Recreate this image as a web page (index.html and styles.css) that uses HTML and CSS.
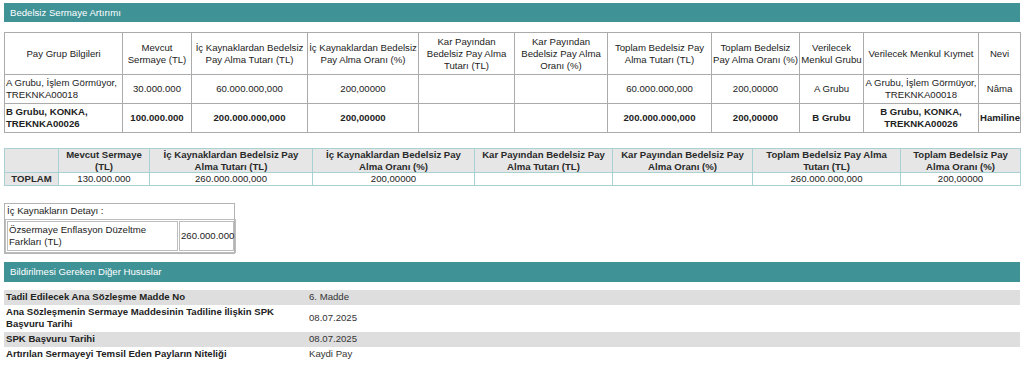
FILE: index.html
```html
<!DOCTYPE html>
<html lang="tr">
<head>
<meta charset="utf-8">
<title>Bedelsiz Sermaye Artırımı</title>
<link rel="stylesheet" href="styles.css">
</head>
<body>
<div class="page">
  <div class="bar">Bedelsiz Sermaye Artırımı</div>

  <table class="main">
    <colgroup>
      <col class="m1"><col class="m2"><col class="m3"><col class="m4"><col class="m5"><col class="m6">
      <col class="m7"><col class="m8"><col class="m9"><col class="m10"><col class="m11">
    </colgroup>
    <tr class="head">
      <td>Pay Grup Bilgileri</td>
      <td>Mevcut Sermaye (TL)</td>
      <td>İç Kaynaklardan Bedelsiz Pay Alma Tutarı (TL)</td>
      <td>İç Kaynaklardan Bedelsiz Pay Alma Oranı (%)</td>
      <td>Kar Payından Bedelsiz Pay Alma Tutarı (TL)</td>
      <td>Kar Payından Bedelsiz Pay Alma Oranı (%)</td>
      <td>Toplam Bedelsiz Pay Alma Tutarı (TL)</td>
      <td>Toplam Bedelsiz Pay Alma Oranı (%)</td>
      <td>Verilecek Menkul Grubu</td>
      <td>Verilecek Menkul Kıymet</td>
      <td>Nevi</td>
    </tr>
    <tr>
      <td class="left">A Grubu, İşlem Görmüyor, TREKNKA00018</td>
      <td>30.000.000</td>
      <td>60.000.000,000</td>
      <td>200,00000</td>
      <td></td>
      <td></td>
      <td>60.000.000,000</td>
      <td>200,00000</td>
      <td>A Grubu</td>
      <td>A Grubu, İşlem Görmüyor, TREKNKA00018</td>
      <td>Nâma</td>
    </tr>
    <tr class="strong">
      <td class="left">B Grubu, KONKA, TREKNKA00026</td>
      <td>100.000.000</td>
      <td>200.000.000,000</td>
      <td>200,00000</td>
      <td></td>
      <td></td>
      <td>200.000.000,000</td>
      <td>200,00000</td>
      <td>B Grubu</td>
      <td>B Grubu, KONKA, TREKNKA00026</td>
      <td>Hamiline</td>
    </tr>
  </table>

  <table class="sum">
    <colgroup>
      <col class="s1"><col class="s2"><col class="s3"><col class="s4"><col class="s5"><col class="s6"><col class="s7"><col class="s8">
    </colgroup>
    <tr class="head">
      <td></td>
      <td>Mevcut Sermaye (TL)</td>
      <td>İç Kaynaklardan Bedelsiz Pay Alma Tutarı (TL)</td>
      <td>İç Kaynaklardan Bedelsiz Pay Alma Oranı (%)</td>
      <td>Kar Payından Bedelsiz Pay Alma Tutarı (TL)</td>
      <td>Kar Payından Bedelsiz Pay Alma Oranı (%)</td>
      <td>Toplam Bedelsiz Pay Alma Tutarı (TL)</td>
      <td>Toplam Bedelsiz Pay Alma Oranı (%)</td>
    </tr>
    <tr>
      <td class="label">TOPLAM</td>
      <td>130.000.000</td>
      <td>260.000.000,000</td>
      <td>200,00000</td>
      <td></td>
      <td></td>
      <td>260.000.000,000</td>
      <td>200,00000</td>
    </tr>
  </table>

  <div class="detail">
    <div class="detail-title">İç Kaynakların Detayı :</div>
    <table class="inner">
      <colgroup><col class="i1"><col class="i2"></colgroup>
      <tr>
        <td>Özsermaye Enflasyon Düzeltme Farkları (TL)</td>
        <td>260.000.000</td>
      </tr>
    </table>
  </div>

  <div class="bar bar2">Bildirilmesi Gereken Diğer Hususlar</div>

  <div class="kv">
    <div class="kv-row alt">
      <div class="key">Tadil Edilecek Ana Sözleşme Madde No</div>
      <div class="val">6. Madde</div>
    </div>
    <div class="kv-row">
      <div class="key">Ana Sözleşmenin Sermaye Maddesinin Tadiline İlişkin SPK Başvuru Tarihi</div>
      <div class="val">08.07.2025</div>
    </div>
    <div class="kv-row alt">
      <div class="key">SPK Başvuru Tarihi</div>
      <div class="val">08.07.2025</div>
    </div>
    <div class="kv-row">
      <div class="key">Artırılan Sermayeyi Temsil Eden Payların Niteliği</div>
      <div class="val">Kaydi Pay</div>
    </div>
  </div>
</div>
</body>
</html>
```

FILE: styles.css
```css
html, body {
  margin: 0;
  padding: 0;
  background: #ffffff;
}

body {
  font-family: "Liberation Sans", Arial, sans-serif;
  font-size: 9.6px;
  line-height: 12px;
  color: #222222;
}

.page {
  display: flex;
  flex-direction: column;
  align-items: flex-start;
  padding: 3px 4px 0 4px;
}

.bar {
  box-sizing: border-box;
  width: 1016px;
  height: 19px;
  line-height: 19px;
  padding-left: 6px;
  background: #3f9397;
  color: #ffffff;
}

.bar2 {
  height: 20px;
  line-height: 20px;
  margin-top: 8px;
}

table {
  border-collapse: collapse;
  table-layout: fixed;
  width: 1016px;
}

/* main table */
.main {
  margin-top: 10px;
}

.main td {
  border: 1px solid #ababab;
  padding: 2px 1px;
  text-align: center;
  vertical-align: middle;
}

.main .head td {
  padding: 2.5px 0;
}

.main td.left {
  text-align: left;
}

.main .strong td {
  font-weight: bold;
}

.m1 { width: 118px; }
.m2 { width: 69px; }
.m3 { width: 116px; }
.m4 { width: 111px; }
.m5 { width: 96px; }
.m6 { width: 93px; }
.m7 { width: 104px; }
.m8 { width: 88px; }
.m9 { width: 64px; }
.m10 { width: 115px; }
.m11 { width: 42px; }

/* totals table */
.sum {
  margin-top: 15px;
}

.sum td {
  border: 1px solid #a9d0d2;
  padding: 0 2px;
  line-height: 11.5px;
  text-align: center;
  vertical-align: middle;
}

.sum .head td,
.sum td.label {
  background: #e6e6e6;
  font-weight: bold;
  color: #2a2a2a;
}

.s1 { width: 54px; }
.s2 { width: 91px; }
.s3 { width: 163px; }
.s4 { width: 162px; }
.s5 { width: 138px; }
.s6 { width: 140px; }
.s7 { width: 148px; }
.s8 { width: 120px; }

/* detail box */
.detail {
  box-sizing: border-box;
  width: 231px;
  margin-top: 17px;
  border: 1px solid #b3b3b3;
}

.detail-title {
  padding: 1px 2px 2px 2px;
}

.inner {
  width: 229px;
  border-collapse: separate;
  border-spacing: 1px;
  border: 1px solid #bdbdbd;
}

.inner td {
  border: 1px solid #bdbdbd;
  padding: 2px 0 2px 1px;
  vertical-align: middle;
  text-align: left;
}

.i1 { width: 171px; }
.i2 { width: 55px; }

/* key/value list */
.kv {
  display: flex;
  flex-direction: column;
  width: 1016px;
  margin-top: 8px;
}

.kv-row {
  display: grid;
  grid-template-columns: 303px 1fr;
  align-items: center;
  padding: 1.5px 2px;
}

.kv-row.alt {
  background: #dedede;
}

.key {
  font-weight: bold;
  padding-right: 20px;
}

.val {
  color: #333333;
}
```
